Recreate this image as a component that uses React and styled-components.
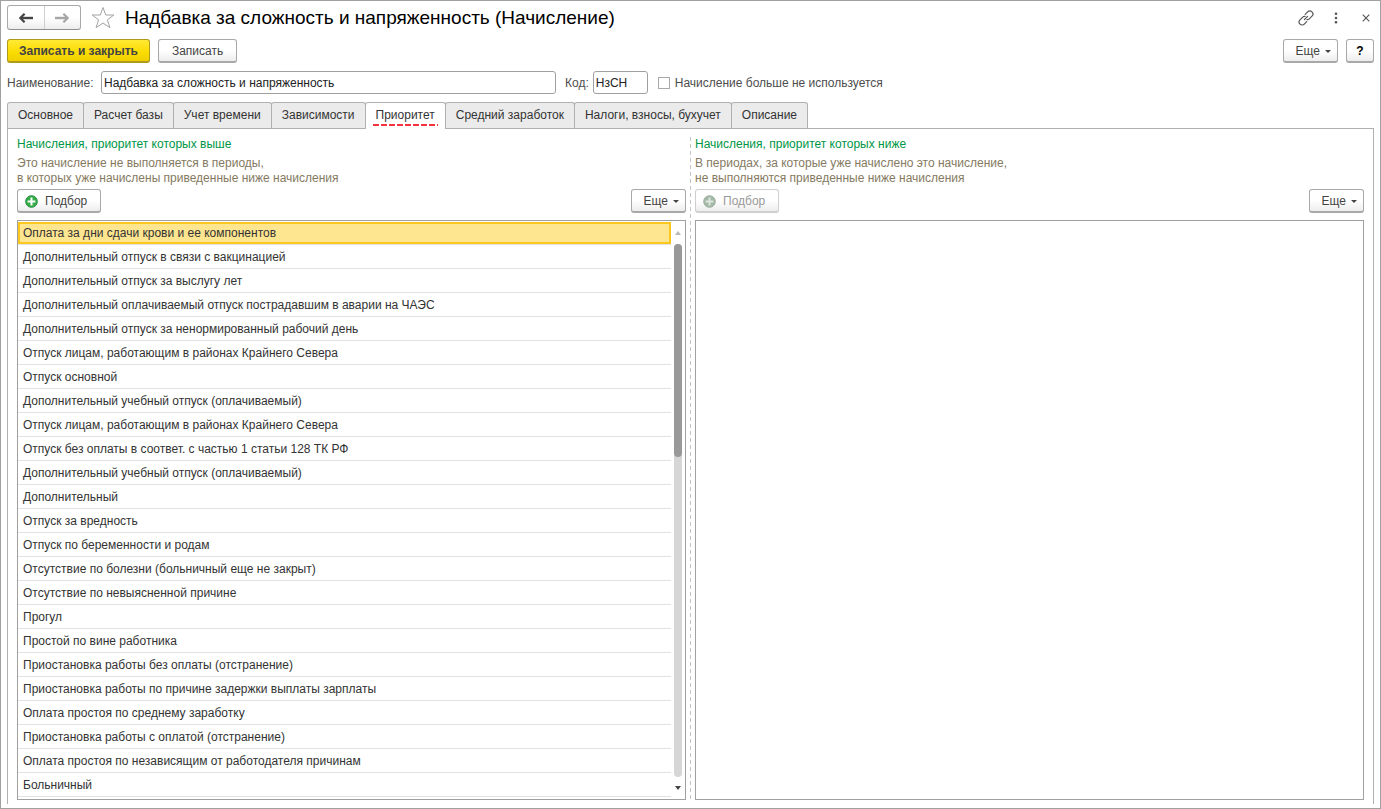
import React from "react";
import styled, { createGlobalStyle, css } from "styled-components";

const Global = createGlobalStyle`
  *, *::before, *::after { box-sizing: border-box; }
  body {
    margin: 0;
    background: #fff;
    color: #333;
    font: 12px/15px "Liberation Sans", Arial, sans-serif;
  }
  button, input { font: inherit; color: inherit; }
`;

const Window = styled.div`
  min-height: 100vh;
  display: flex;
  flex-direction: column;
  padding: 4px 6px;
  border: 1px solid #a0a0a0;
`;

const TitleBar = styled.header`
  display: flex;
  align-items: center;
  height: 25px;
`;

const History = styled.div`
  display: flex;
  width: 74px;
  height: 25px;
  border: 1px solid #a8a8a8;
  border-bottom-color: #8f8f8f;
  border-radius: 3px;
  background: linear-gradient(#fff 50%, #ededed);
`;

const HistoryButton = styled.button`
  flex: 1;
  display: flex;
  align-items: center;
  justify-content: center;
  padding: 0;
  border: 0;
  background: none;
  color: #444;
  & + & { border-left: 1px solid #d0d0d0; }
  &:disabled { color: #a6a6a6; }
`;

const IconButton = styled.button`
  display: flex;
  align-items: center;
  justify-content: center;
  width: ${(p) => p.$width || 24}px;
  height: 24px;
  padding: 0;
  border: 0;
  background: none;
  color: #555;
`;

const Title = styled.h1`
  flex: 1;
  margin: 0;
  font-size: 19px;
  line-height: 24px;
  font-weight: 400;
  color: #000;
`;

const TitleTools = styled.div`
  display: flex;
  align-items: center;
  gap: 6px;
  margin-right: -4px;
`;

const Bar = styled.div`
  display: flex;
  align-items: center;
  gap: 8px;
  margin-top: ${(p) => p.$top || 0}px;
`;

const Spacer = styled.span`
  flex: 1;
`;

const Button = styled.button`
  display: inline-flex;
  align-items: center;
  justify-content: center;
  height: 24px;
  padding: 2px 13px 0;
  border: 1px solid #a8a8a8;
  border-bottom: 2px solid #a8a8a8;
  border-radius: 3px;
  background: linear-gradient(#fff 50%, #ededed);
  color: #444;
  white-space: nowrap;
  ${(p) =>
    p.$primary &&
    css`
      padding: 2px 11px 0;
      border-color: #b09a1c;
      background: linear-gradient(#ffe933, #fbdc00 60%, #efcf00);
      font-weight: 700;
    `}
  ${(p) =>
    p.$icon &&
    css`
      gap: 7px;
      padding-left: 7px;
    `}
  ${(p) =>
    p.$menu &&
    css`
      gap: 5px;
      padding: 2px 6px 0 12px;
    `}
  &:disabled {
    border-color: #cfcfcf;
    color: #999;
  }
`;

const HelpButton = styled(Button)`
  width: 28px;
  padding: 2px 0 0;
  font-weight: 700;
  color: #000;
`;

const Caret = styled.span`
  border: 3px solid transparent;
  border-top-color: #444;
  border-bottom: 0;
`;

const Form = styled.div`
  display: flex;
  align-items: center;
  margin-top: 8px;
`;

const Field = styled.label`
  display: flex;
  align-items: center;
  gap: 4px;
  margin-right: 9px;
  color: #4d4d4d;
`;

const LabelText = styled.span`
  min-width: ${(p) => p.$width || 0}px;
  padding-top: 2px;
`;

const TextInput = styled.input`
  width: ${(p) => p.$width}px;
  height: 23px;
  padding: 0 2px;
  border: 1px solid #a0a0a0;
  border-radius: 3px;
  background: #fff;
  color: #222;
`;

const CheckLabel = styled.label`
  display: flex;
  align-items: center;
  gap: 5px;
  margin-left: 1px;
  color: #4d4d4d;
`;

const CheckBox = styled.input`
  appearance: none;
  width: 12px;
  height: 12px;
  margin: 0;
  border: 1px solid #a8a8a8;
  background: #fff;
`;

const Tabs = styled.nav`
  display: flex;
  margin-top: 8px;
`;

const Tab = styled.button`
  height: 26px;
  margin-right: -1px;
  padding: 0 10px;
  border: 1px solid #b0b0b0;
  border-bottom: 0;
  border-radius: 3px 3px 0 0;
  background: #ebebeb;
  color: #333;
  white-space: nowrap;
  ${(p) =>
    p.$active &&
    css`
      height: 27px;
      margin-bottom: -1px;
      padding-bottom: 1px;
      background: #fff;
      z-index: 1;
    `}
`;

const TabText = styled.span`
  position: relative;
  ${(p) =>
    p.$active &&
    css`
      &::after {
        content: "";
        position: absolute;
        left: -3px;
        right: -3px;
        bottom: -4px;
        height: 2px;
        background: repeating-linear-gradient(90deg, #f5333f 0 6px, transparent 6px 8px);
      }
    `}
`;

const Panel = styled.main`
  flex: 1;
  display: grid;
  grid-template-columns: minmax(0, 1fr) 9px minmax(0, 1fr);
  padding: 8px 9px 4px;
  border: 1px solid #b0b0b0;
  border-bottom: 0;
`;

const Divider = styled.div`
  justify-self: center;
  width: 1px;
  background: repeating-linear-gradient(#c4c4c4 0 4px, transparent 4px 7px);
`;

const Column = styled.section`
  display: flex;
  flex-direction: column;
`;

const Heading = styled.h2`
  margin: 0;
  font-size: 12px;
  line-height: 15px;
  font-weight: 400;
  color: #009646;
`;

const Note = styled.p`
  margin: 4px 0 0;
  color: #857a5f;
`;

const ListBox = styled.div`
  flex: 1;
  display: flex;
  margin-top: 7px;
  border: 1px solid #a0a0a0;
`;

const Rows = styled.ul`
  flex: 1;
  margin: 0 2px 0 0;
  padding: 0 0 2px;
  list-style: none;
`;

const Row = styled.li`
  height: 24px;
  padding: 5px 5px 3px;
  border-bottom: 1px solid #e2e2e2;
  color: #333;
  white-space: nowrap;
  overflow: hidden;
  ${(p) =>
    p.$selected &&
    css`
      padding: 1px 0;
    `}
`;

const Selection = styled.span`
  display: block;
  height: 22px;
  padding: 2px 3px;
  border: 2px solid #fcc81e;
  background: #fee590;
`;

const ScrollBar = styled.div`
  display: flex;
  flex-direction: column;
  align-items: center;
  width: 12px;
  padding: 10px 2px 9px 0;
`;

const Arrow = styled.span`
  border: 3px solid transparent;
  ${(p) =>
    p.$up
      ? css`
          border-top: 0;
          border-bottom: 4px solid #b8b8b8;
        `
      : css`
          border-bottom: 0;
          border-top: 4px solid #444;
        `}
`;

const Track = styled.div`
  flex: 1;
  width: 8px;
  margin: 9px 0;
  border-radius: 4px;
  background: #d6d6d6;
`;

const Thumb = styled.div`
  height: 40%;
  border-radius: 4px;
  background: #999;
`;

const ArrowIcon = ({ right }) => (
  <svg width="14" height="10" viewBox="0 0 14 10" aria-hidden="true">
    <g transform={right ? "rotate(180 7 5)" : undefined} fill="none" stroke="currentColor">
      <path d="M2 5H14" strokeWidth="2.4" />
      <path d="M5.6 .8L1.4 5L5.6 9.2" strokeWidth="2.2" />
    </g>
  </svg>
);

const StarIcon = () => (
  <svg width="24" height="24" viewBox="0 0 24 24" fill="none" stroke="#a3a3a3" aria-hidden="true">
    <path d="M12 1.5L14.7 9H22.8L16.4 13.8L18.9 21.6L12 17L5.1 21.6L7.6 13.8L1.2 9H9.3Z" />
  </svg>
);

const LinkIcon = () => (
  <svg width="16" height="16" viewBox="0 0 16 16" fill="none" stroke="currentColor" strokeWidth="1.2" strokeLinecap="round" aria-hidden="true">
    <path d="M7.2 4.3L9.6 1.9A3 3 0 0 1 14 6.2L11.3 8.9A3 3 0 0 1 9 9.6" />
    <path d="M8.7 11.7L6.3 14.1A3 3 0 0 1 2 9.8L4.7 7.1A3 3 0 0 1 7 6.4" />
    <path d="M6.4 9.6L9.6 6.4" />
  </svg>
);

const DotsIcon = () => (
  <svg width="4" height="12" viewBox="0 0 4 12" fill="currentColor" aria-hidden="true">
    <circle cx="2" cy="1.7" r="1.3" />
    <circle cx="2" cy="6" r="1.3" />
    <circle cx="2" cy="10.3" r="1.3" />
  </svg>
);

const CloseIcon = () => (
  <svg width="8" height="8" viewBox="0 0 8 8" stroke="currentColor" strokeWidth="1.1" aria-hidden="true">
    <path d="M.7 .7L7.3 7.3M7.3 .7L.7 7.3" />
  </svg>
);

const PlusIcon = ({ muted }) => (
  <svg width="13" height="13" viewBox="0 0 13 13" aria-hidden="true">
    <circle cx="6.5" cy="6.5" r="5.8" fill={muted ? "#a3b8a6" : "#35ad48"} stroke={muted ? "#9cb09f" : "#23893a"} />
    <path d="M6.5 2.6V10.4M2.6 6.5H10.4" stroke={muted ? "#dfe6e0" : "#fff"} strokeWidth="2" />
  </svg>
);

const MoreButton = () => (
  <Button type="button" $menu aria-haspopup="menu">
    Еще
    <Caret />
  </Button>
);

const tabs = [
  "Основное",
  "Расчет базы",
  "Учет времени",
  "Зависимости",
  "Приоритет",
  "Средний заработок",
  "Налоги, взносы, бухучет",
  "Описание",
];

const higher = [
  "Оплата за дни сдачи крови и ее компонентов",
  "Дополнительный отпуск в связи с вакцинацией",
  "Дополнительный отпуск за выслугу лет",
  "Дополнительный оплачиваемый отпуск пострадавшим в аварии на ЧАЭС",
  "Дополнительный отпуск за ненормированный рабочий день",
  "Отпуск лицам, работающим в районах Крайнего Севера",
  "Отпуск основной",
  "Дополнительный учебный отпуск (оплачиваемый)",
  "Отпуск лицам, работающим в районах Крайнего Севера",
  "Отпуск без оплаты в соответ. с частью 1 статьи 128 ТК РФ",
  "Дополнительный учебный отпуск (оплачиваемый)",
  "Дополнительный",
  "Отпуск за вредность",
  "Отпуск по беременности и родам",
  "Отсутствие по болезни (больничный еще не закрыт)",
  "Отсутствие по невыясненной причине",
  "Прогул",
  "Простой по вине работника",
  "Приостановка работы без оплаты (отстранение)",
  "Приостановка работы по причине задержки выплаты зарплаты",
  "Оплата простоя по среднему заработку",
  "Приостановка работы с оплатой (отстранение)",
  "Оплата простоя по независящим от работодателя причинам",
  "Больничный",
];

export default function App() {
  return (
    <Window>
      <Global />
      <TitleBar>
        <History>
          <HistoryButton type="button" aria-label="Назад"><ArrowIcon /></HistoryButton>
          <HistoryButton type="button" aria-label="Вперед" disabled><ArrowIcon right /></HistoryButton>
        </History>
        <IconButton type="button" $width={44} aria-label="В избранное"><StarIcon /></IconButton>
        <Title>Надбавка за сложность и напряженность (Начисление)</Title>
        <TitleTools>
          <IconButton type="button" aria-label="Ссылка"><LinkIcon /></IconButton>
          <IconButton type="button" aria-label="Меню"><DotsIcon /></IconButton>
          <IconButton type="button" aria-label="Закрыть"><CloseIcon /></IconButton>
        </TitleTools>
      </TitleBar>

      <Bar $top={9}>
        <Button type="button" $primary>Записать и закрыть</Button>
        <Button type="button">Записать</Button>
        <Spacer />
        <MoreButton />
        <HelpButton type="button" aria-label="Справка">?</HelpButton>
      </Bar>

      <Form>
        <Field>
          <LabelText $width={90}>Наименование:</LabelText>
          <TextInput $width={455} type="text" defaultValue="Надбавка за сложность и напряженность" />
        </Field>
        <Field>
          <LabelText>Код:</LabelText>
          <TextInput $width={55} type="text" defaultValue="НзСН" />
        </Field>
        <CheckLabel>
          <CheckBox type="checkbox" />
          <LabelText>Начисление больше не используется</LabelText>
        </CheckLabel>
      </Form>

      <Tabs role="tablist">
        {tabs.map((name) => {
          const active = name === "Приоритет";
          return (
            <Tab key={name} type="button" role="tab" aria-selected={active} $active={active}>
              <TabText $active={active}>{name}</TabText>
            </Tab>
          );
        })}
      </Tabs>

      <Panel>
        <Column>
          <Heading>Начисления, приоритет которых выше</Heading>
          <Note>
            Это начисление не выполняется в периоды,
            <br />в которых уже начислены приведенные ниже начисления
          </Note>
          <Bar $top={3}>
            <Button type="button" $icon><PlusIcon />Подбор</Button>
            <Spacer />
            <MoreButton />
          </Bar>
          <ListBox>
            <Rows role="listbox" aria-label="Начисления, приоритет которых выше">
              {higher.map((name, i) => (
                <Row key={i} role="option" aria-selected={i === 0} $selected={i === 0}>
                  {i === 0 ? <Selection>{name}</Selection> : name}
                </Row>
              ))}
            </Rows>
            <ScrollBar>
              <Arrow $up />
              <Track><Thumb /></Track>
              <Arrow />
            </ScrollBar>
          </ListBox>
        </Column>
        <Divider />
        <Column>
          <Heading>Начисления, приоритет которых ниже</Heading>
          <Note>
            В периодах, за которые уже начислено это начисление,
            <br />не выполняются приведенные ниже начисления
          </Note>
          <Bar $top={3}>
            <Button type="button" $icon disabled><PlusIcon muted />Подбор</Button>
            <Spacer />
            <MoreButton />
          </Bar>
          <ListBox role="listbox" aria-label="Начисления, приоритет которых ниже" />
        </Column>
      </Panel>
    </Window>
  );
}
